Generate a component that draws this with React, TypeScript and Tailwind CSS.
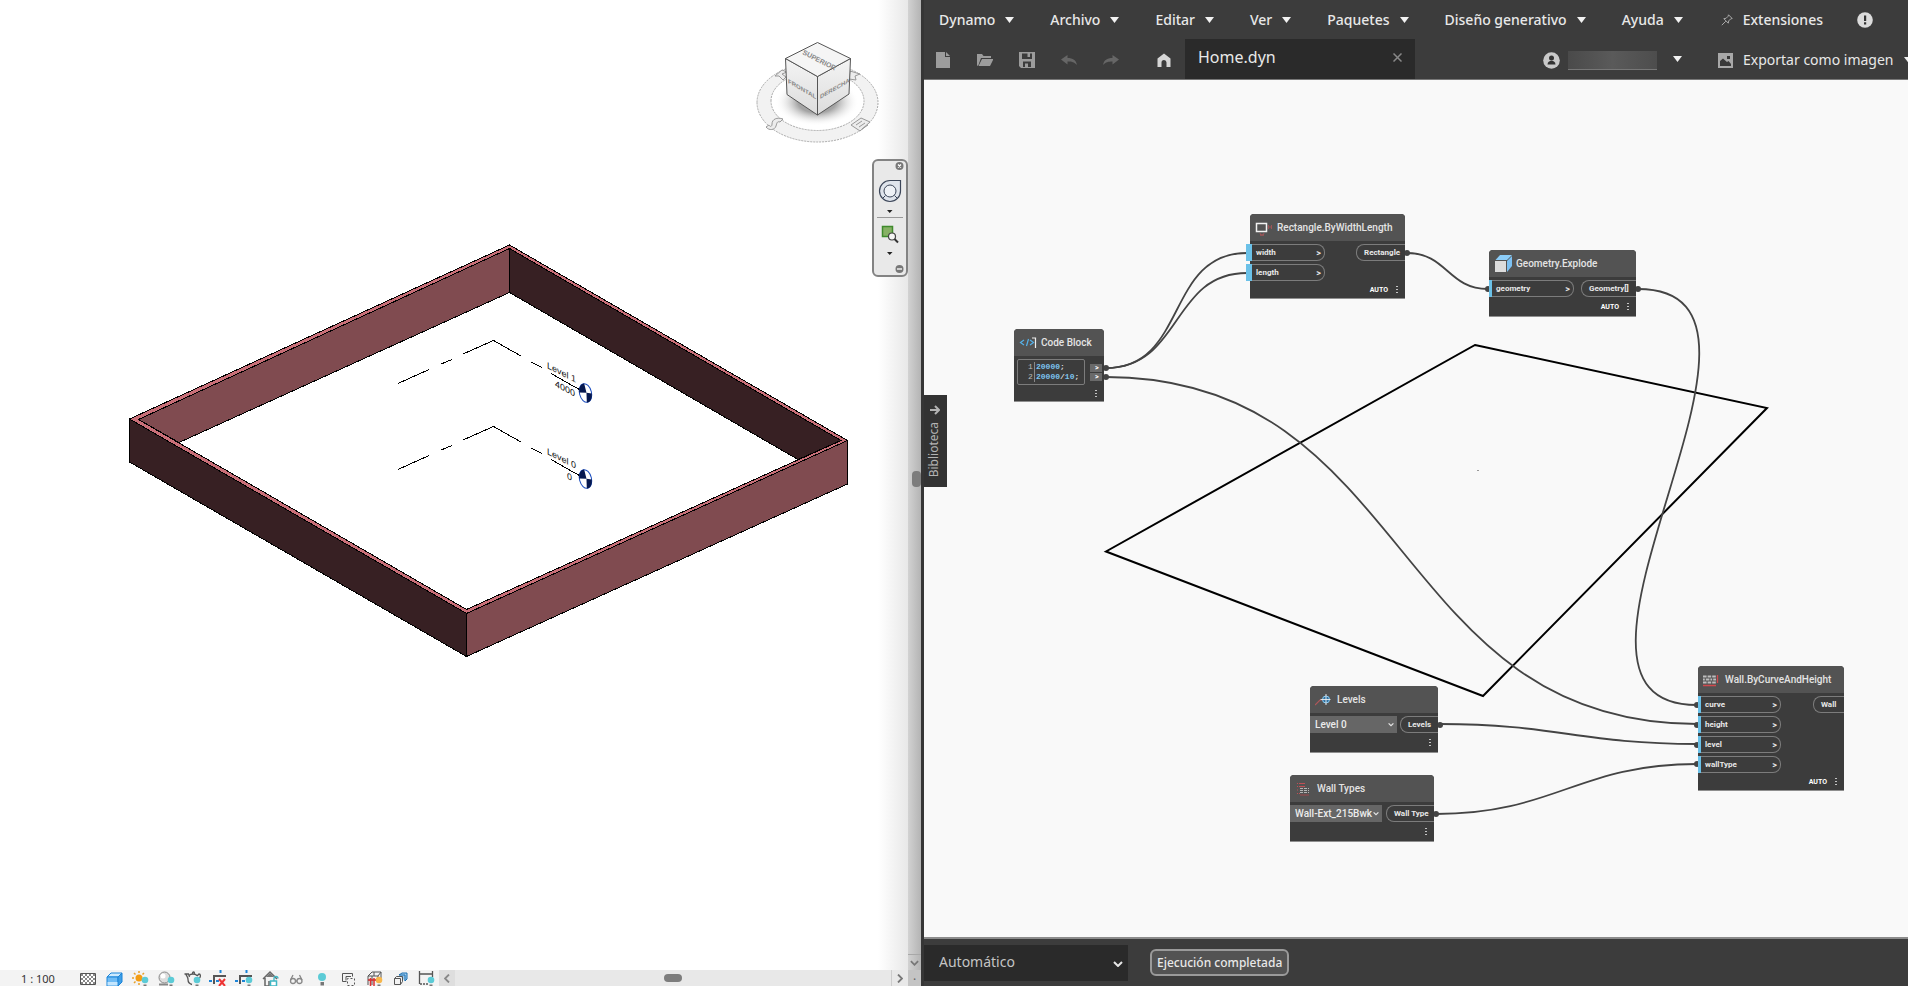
import type { ReactNode } from "react";

const wire = (x1: number, y1: number, x2: number, y2: number, k: number) =>
  `M${x1} ${y1} C${x1 + k} ${y1} ${x2 - k} ${y2} ${x2} ${y2}`;

const wires = [
  wire(1106, 368, 1247, 253, 82),
  wire(1106, 368, 1247, 273, 76),
  wire(1106, 377, 1697, 724, 308),
  wire(1407, 253, 1488, 289, 40),
  wire(1638, 289, 1697, 705, 185),
  wire(1440, 724, 1697, 744, 116),
  wire(1436, 814, 1697, 764, 119),
];

const plugs = [
  [1106, 368], [1106, 377], [1407, 253], [1488, 289], [1638, 289],
  [1440, 725], [1436, 814], [1697, 705], [1697, 725], [1697, 745], [1697, 764],
];

function Caret({ className = "" }: { className?: string }) {
  return (
    <svg className={`h-[6px] w-[9px] shrink-0 ${className}`} viewBox="0 0 9 6" fill="#f2f2f2" aria-hidden="true">
      <path d="M0 0h9L4.500 6z" />
    </svg>
  );
}

function Chevron({ className = "" }: { className?: string }) {
  return (
    <svg className={`pointer-events-none absolute ${className}`} viewBox="0 0 10 6" fill="none" stroke="#e6e6e6" strokeWidth="2" aria-hidden="true">
      <path d="M1 1l4 4 4-4" />
    </svg>
  );
}

/* ---------- Model view ---------- */

function LevelMark({ dy, name, value, vx }: { dy: number; name: string; value: string; vx: number }) {
  return (
    <g transform={`translate(0 ${dy})`}>
      <path
        d="M398 383.500L429 369.500M441 364L452 359.500M463 354L493.500 340.500L521 356M531 362L542 367.500M551 373.500L582 391"
        stroke="#000" fill="none" shapeRendering="crispEdges"
      />
      <g transform="translate(585.500 393) rotate(-14)">
        <ellipse rx="6" ry="9.500" fill="#fff" stroke="#1d4fc0" />
        <path d="M1 0L1-9.500A6 9.500 0 0 0-6 -2z M1 0L-1 9.500A6 9.500 0 0 0 6 2z" fill="#06184f" />
      </g>
      <text transform="translate(547 368) skewY(27)" fontSize="9" fill="#111">{name}</text>
      <text transform={`translate(${vx} ${387 + (vx - 556) * 0.5}) skewY(27)`} fontSize="9" fill="#111">{value}</text>
    </g>
  );
}

function ModelDrawing() {
  return (
    <svg className="h-full w-full" viewBox="0 0 908 970" preserveAspectRatio="xMinYMin meet" fontFamily="'Liberation Sans Narrow','Liberation Sans',sans-serif" role="img" aria-label="Vista 3D">
      <defs>
        <radialGradient id="shade">
          <stop offset="0.450" stopColor="#8c8c8c" stopOpacity="0.800" />
          <stop offset="1" stopColor="#fff" stopOpacity="0" />
        </radialGradient>
        <linearGradient id="face" x1="0" y1="0" x2="0" y2="1">
          <stop offset="0" stopColor="#f4f4f4" />
          <stop offset="1" stopColor="#dcdcdc" />
        </linearGradient>
      </defs>

      <g stroke="#000" strokeWidth="1" shapeRendering="crispEdges">
        <path d="M138.500 419.500L509.500 248.500V292.500L179 442.500z" fill="#804b50" />
        <path d="M509.500 248.500L841 440.500L798 459.500L509.500 292.500z" fill="#372023" />
        <path fillRule="evenodd" d="M509.500 245L847.500 440.500L466.500 613.500L129.500 419z M509.500 248.500L138.500 419.500L466.500 609.500L841 440.500z" fill="#c96f78" />
        <path d="M129.500 419V462L466.500 656.500V613.500z" fill="#372023" />
        <path d="M466.500 613.500V656.500L847.500 484V440.500z" fill="#804b50" />
      </g>

      <LevelMark dy={0} name="Level 1" value="4000" vx={555} />
      <LevelMark dy={86} name="Level 0" value="0" vx={567} />

      <g>
        <path fillRule="evenodd" d="M757 102.500a60.500 39.500 0 1 0 121 0a60.500 39.500 0 1 0-121 0z M771 101a46.500 29.500 0 1 1 93 0a46.500 29.500 0 1 1-93 0z" fill="#f2f2f2" stroke="#a9a9a9" strokeDasharray="2 1" />
        <ellipse cx="817" cy="102" rx="42" ry="24" fill="url(#shade)" />
        <g fill="#ececec" stroke="#999" strokeWidth="1" strokeLinejoin="round">
          <path d="M766 127c3 4 9 3 10-1 1-3 1-5 4-4l3-3c-6-2-11 0-11 5 0 3-2 3-3 1z" />
          <path d="M851 125l10-7 9 4-10 9z" />
          <path d="M856 125l6-4M859 127l6-4M862 129l6-4" />
          <path d="M775 76l7-6 5 2-5 2 4 3-3 3-4-4z" />
          <path d="M850 71l10 3-5 2 1 4-7-1z" />
        </g>
        <g stroke="#555" strokeWidth="1" strokeLinejoin="round">
          <path d="M785.500 58.500L817.500 76.500V115L787 94.500z" fill="url(#face)" />
          <path d="M817.500 76.500L850.500 58.500L849 94L817.500 115z" fill="url(#face)" />
          <path d="M817.500 42.500L850.500 58.500L817.500 76.500L785.500 58.500z" fill="#f5f5f5" />
        </g>
        <g fill="#858585" fontWeight="bold" fontSize="6">
          <text transform="translate(802 54) rotate(27)" fontSize="7">SUPERIOR</text>
          <text transform="translate(788 83) skewY(30)">FRONTAL</text>
          <text transform="translate(820 99) skewY(-30)">DERECHA</text>
        </g>
      </g>
    </svg>
  );
}

function NavBar() {
  return (
    <nav className="absolute top-[159px] right-0 flex h-[118px] w-[36px] flex-col rounded-md border-2 border-[#838383] bg-[#e9e9e9]" aria-label="Navegación">
      <svg className="h-full w-full" viewBox="874 161 32 114" fill="none" aria-hidden="true">
        <circle cx="899.500" cy="166" r="4" fill="#777" />
        <path d="M898 164.500l3 3m0-3l-3 3" stroke="#fff" strokeWidth="1.300" />
        <path d="M890 180.500h10.500v10.500a10.500 10.500 0 1 1-10.500-10.500z" fill="#dfe4ec" stroke="#3c4659" strokeWidth="1.200" />
        <circle cx="890" cy="191" r="6" fill="#eef1f6" stroke="#3c4659" />
        <path d="M885.500 195.500l-3 3m12-3l3 3" stroke="#3c4659" />
        <path d="M887 210h5.500l-2.750 3zM887 252h5.500l-2.750 3z" fill="#222" />
        <path d="M877 217.500h26" stroke="#999" />
        <path d="M882.500 226.500h10v10h-10z" fill="#86b164" stroke="#3f8a2c" strokeWidth="1.500" />
        <circle cx="892" cy="236.500" r="3.500" fill="#f5f5f5" stroke="#444" strokeWidth="1.200" />
        <path d="M894.500 239l3.500 3.500" stroke="#333" strokeWidth="2" />
        <circle cx="899.500" cy="269" r="4" fill="#777" />
        <path d="M897 269h5" stroke="#fff" strokeWidth="1.300" />
      </svg>
    </nav>
  );
}

const Bulb = ({ c = "#5ccbd6" }: { c?: string }) => (
  <>
    <circle cx="14" cy="10" r="3.300" fill={c} />
    <path d="M12.500 14.500h3v2h-3z" fill="#777" />
  </>
);

const viewTools: { label: string; icon: ReactNode }[] = [
  {
    label: "Nivel de detalle",
    icon: (
      <>
        <path d="M1.500 3.500h15v11h-15z" fill="#fff" stroke="#555" />
        <path d="M2 5h14M2 9h14M2 13h14" stroke="#888" strokeDasharray="2 2" strokeWidth="2" />
        <path d="M4 7h12M4 11h12" stroke="#888" strokeDasharray="2 2" strokeWidth="2" />
      </>
    ),
  },
  {
    label: "Estilo visual",
    icon: (
      <>
        <path d="M2 7l4-4h11l-4 4z" fill="#cdeafe" stroke="#1b84d8" />
        <path d="M2 7h11v9H2z" fill="#6fbcf5" stroke="#1b84d8" />
        <path d="M13 7l4-4v9l-4 4z" fill="#3f9ee6" stroke="#1b84d8" />
        <path d="M2.500 12h10v3.500h-10z" fill="#c3e5fd" />
      </>
    ),
  },
  {
    label: "Camino de sol",
    icon: (
      <>
        <circle cx="8" cy="8" r="3.500" fill="#f39c12" />
        <path d="M8 1v2M8 13v2M1 8h2M3 3l1.500 1.500M3 13l1.500-1.500M13 3l-1.500 1.500" stroke="#e9a12a" strokeWidth="1.500" />
        <Bulb />
      </>
    ),
  },
  {
    label: "Sombras",
    icon: (
      <>
        <circle cx="7.500" cy="7.500" r="5.500" fill="#ddd" stroke="#888" />
        <circle cx="6" cy="6" r="2.500" fill="#fff" />
        <path d="M2 14.500h9" stroke="#888" strokeWidth="2" />
        <Bulb />
      </>
    ),
  },
  {
    label: "Renderización",
    icon: (
      <>
        <path d="M1.500 4h4l1 3M3 4.500c1 2 2 3 2 5 0 3 2 4.500 4 5M6 5.500c2-2 6-2 8 0M9.500 3.500c0-2 2-2 2 0M14 6l2-2c2 0 1.500 3 .5 4" stroke="#555" fill="none" strokeWidth="1.300" />
        <Bulb />
      </>
    ),
  },
  {
    label: "Recortar vista",
    icon: (
      <>
        <path d="M5 14V6h12" stroke="#555" fill="none" strokeWidth="2" />
        <path d="M0 11h3M7 11h3M11.500 0v3" stroke="#1b84d8" strokeWidth="2" />
        <path d="M10 9l6 7m0-7l-6 7" stroke="#e33" strokeWidth="2" />
      </>
    ),
  },
  {
    label: "Mostrar región de recorte",
    icon: (
      <>
        <path d="M5 14V6h12" stroke="#555" fill="none" strokeWidth="2" />
        <path d="M0 11h3M7 11h3M11.500 0v3" stroke="#1b84d8" strokeWidth="2" />
        <Bulb />
      </>
    ),
  },
  {
    label: "Vista 3D bloqueada",
    icon: (
      <>
        <path d="M2 9l7-7 7 7M4 8v8h4v-5" stroke="#666" fill="none" strokeWidth="1.500" />
        <path d="M5 7l4-4 4 4z" fill="#777" />
        <path d="M9.500 11h6v5h-6z" fill="#fff" stroke="#3fb7c4" strokeWidth="1.500" />
        <path d="M13 11V8.500a2 2 0 0 1 4 0" stroke="#3fb7c4" fill="none" strokeWidth="1.300" />
      </>
    ),
  },
  {
    label: "Ocultar temporalmente",
    icon: (
      <g stroke="#888" fill="none" strokeWidth="1.300">
        <circle cx="6" cy="11" r="2.500" />
        <circle cx="12.500" cy="11" r="2.500" />
        <path d="M8.500 11h1.500M3.500 10L6 5M15 10l-2.500-5" />
      </g>
    ),
  },
  {
    label: "Mostrar elementos ocultos",
    icon: (
      <>
        <circle cx="9" cy="7" r="4" fill="#5ccbd6" />
        <path d="M7.500 12h3.500v3.500H7.500z" fill="#777" />
      </>
    ),
  },
  {
    label: "Propiedades temporales",
    icon: (
      <>
        <path d="M3.500 3.500h10v3M3.500 3.500v8h4M7 6.500h5M7 6.500v4" stroke="#555" fill="none" />
        <path d="M8.500 15.500h7v-7h-7z" stroke="#555" fill="none" strokeDasharray="2 2" />
      </>
    ),
  },
  {
    label: "Modelo analítico",
    icon: (
      <>
        <path d="M3 6l4-4h9l-3 4zM3 6v9M7 6v9M13 6v4M16 2v6M3 10h9M9 2v4" stroke="#555" fill="none" />
        <path d="M3 10h8M5.500 8v8M9 8v8" stroke="#d33" strokeWidth="1.500" />
        <Bulb c="#f7b64a" />
      </>
    ),
  },
  {
    label: "Conjuntos de desplazamiento",
    icon: (
      <>
        <path d="M8 5l3-2h5v6l-2 2M8 5h6v6" stroke="#1b6fb0" fill="#9ccbee" />
        <path d="M3.500 8.500h6v6h-6z" fill="#f3f3f3" stroke="#555" />
        <path d="M3.500 8.500l2-2h6v5l-2 3" stroke="#555" fill="none" />
      </>
    ),
  },
  {
    label: "Revelar restricciones",
    icon: (
      <>
        <path d="M2.500 1v13M15.500 1v6M2 4h14" stroke="#555" fill="none" strokeWidth="1.300" />
        <path d="M3 14h8" stroke="#555" strokeWidth="1.300" strokeDasharray="2 1" />
        <Bulb />
      </>
    ),
  },
];

function ModelPane() {
  return (
    <section className="flex min-w-0 flex-col bg-white">
      <div className="flex min-h-0 flex-1">
        <div className="relative min-w-0 flex-1 overflow-hidden">
          <div className="absolute inset-y-0 right-0 w-[30px] bg-linear-to-r from-white to-[#e8e8e8]" />
          <div className="absolute inset-0">
            <ModelDrawing />
          </div>
          <NavBar />
        </div>
        <div className="relative flex w-[13px] shrink-0 flex-col items-end justify-end bg-linear-to-r from-[#d2d2d2] to-[#b4b4b4]">
          <div className="absolute top-[471px] right-0 h-[16px] w-[9px] rounded bg-[#7d7d7d]" />
          <div className="flex h-4 w-full items-center justify-center border-t border-[#a8a8a8]">
            <svg className="h-[6px] w-[9px]" viewBox="0 0 10 6" fill="none" stroke="#777" strokeWidth="2" aria-hidden="true"><path d="M1 1l4 4 4-4" /></svg>
          </div>
        </div>
      </div>
      <div className="flex h-4 shrink-0 bg-[#f3f3f3]">
        <span className="w-[79px] shrink-0 pl-[21px] font-['Noto_Sans',sans-serif] text-[11px] leading-[18px] whitespace-pre text-[#333]">1 : 100</span>
        <div className="flex shrink-0 gap-2 overflow-hidden">
          {viewTools.map((t) => (
            <button key={t.label} type="button" aria-label={t.label} className="h-[18px] w-[18px]">
              <svg className="h-[18px] w-[18px]" viewBox="0 0 18 18" fill="none" aria-hidden="true">{t.icon}</svg>
            </button>
          ))}
        </div>
        <div className="ml-1 flex min-w-0 flex-1 items-center bg-[#e8e8e8]">
          <span className="flex h-full w-4 items-center justify-center bg-[#dedede]">
            <svg className="h-[9px] w-[6px]" viewBox="0 0 6 9" fill="none" stroke="#888" strokeWidth="1.800" aria-hidden="true"><path d="M5 .5l-4 4 4 4" /></svg>
          </span>
          <span className="flex flex-1 justify-center">
            <span className="h-2 w-[18px] rounded bg-[#7d7d7d]" />
          </span>
          <span className="flex h-full w-[17px] items-center justify-center border-l border-[#ccc]">
            <svg className="h-[9px] w-[6px]" viewBox="0 0 6 9" fill="none" stroke="#777" strokeWidth="1.800" aria-hidden="true"><path d="M1 .5l4 4-4 4" /></svg>
          </span>
          <span className="h-full w-[13px] bg-[#c4c4c4] text-center text-xs leading-3 text-[#666]">.</span>
        </div>
      </div>
    </section>
  );
}

/* ---------- Graph nodes ---------- */

function Dots() {
  return (
    <button type="button" aria-label="Más" className="flex flex-col gap-[2px] px-1">
      <span className="h-px w-[2px] bg-[#c4c4c4]" />
      <span className="h-px w-[2px] bg-[#c4c4c4]" />
      <span className="h-px w-[2px] bg-[#c4c4c4]" />
    </button>
  );
}

function Node({ place, title, icon, auto, children }: { place: string; title: string; icon: ReactNode; auto?: boolean; children: ReactNode }) {
  return (
    <article className={`absolute flex flex-col rounded-t border-b border-[#8f8f8f] bg-[#3c3c3c] font-['Roboto',sans-serif] ${place}`}>
      <header className="flex h-[27px] shrink-0 items-center gap-1 rounded-t bg-[#535353] pl-[5px]">
        <svg className="h-[18px] w-[18px] shrink-0" viewBox="0 0 18 18" fill="none" aria-hidden="true">{icon}</svg>
        <h2 className="text-[10px] leading-4 font-medium whitespace-nowrap text-[#e4e4e4]">{title}</h2>
      </header>
      <div className="flex items-start justify-between pt-[3px]">{children}</div>
      <footer className="flex flex-1 items-center justify-end gap-1 pr-[3px]">
        {auto && <span className="text-[7px] leading-3 font-bold text-white">AUTO</span>}
        <Dots />
      </footer>
    </article>
  );
}

function Inputs({ names, width, wide }: { names: string[]; width: string; wide?: boolean }) {
  return (
    <ul className={`flex flex-col gap-[3px] ${wide ? "-ml-1" : ""} ${width}`}>
      {names.map((n) => (
        <li key={n} className="flex h-[17px]">
          <span className={`shrink-0 bg-[#6bc1e8] ${wide ? "w-[6px]" : "w-[3px]"}`} />
          <span className="flex flex-1 items-center justify-between rounded-r-lg border border-l-0 border-[#7c7c7c] pr-[3px] pl-1 text-[8px] leading-3 font-bold text-[#e8e8e8]">
            {n}
            <span className="text-[9px]">&gt;</span>
          </span>
        </li>
      ))}
    </ul>
  );
}

function Output({ name, width }: { name: string; width: string }) {
  return (
    <div className={`flex h-[17px] items-center rounded-l-lg border border-r-0 border-[#7c7c7c] pl-[7px] text-[8px] leading-3 font-bold whitespace-nowrap text-[#e8e8e8] ${width}`}>
      {name}
    </div>
  );
}

function Picker({ label, value, width }: { label: string; value: string; width: string }) {
  return (
    <div className={`relative h-[17px] ${width}`}>
      <select aria-label={label} defaultValue={value} className="block h-full w-full appearance-none bg-[#666] pl-[5px] text-[10px] leading-4 font-medium text-[#ececec] outline-none">
        <option>{value}</option>
      </select>
      <Chevron className="top-[6px] right-[3px] h-[5px] w-[6px]" />
    </div>
  );
}

function Canvas() {
  return (
    <main className="relative min-h-0 flex-1 overflow-hidden bg-[#f9f9f9]">
      <svg className="absolute top-0 left-0 h-full w-full" fill="none" aria-hidden="true">
        <g transform="translate(-924 -80)">
          <path d="M1475 345L1767 408L1483 696L1106 551.500z" stroke="#000" strokeWidth="2" />
          <path d="M1477 470.500h2" stroke="#999" />
          {wires.map((d) => <path key={d} d={d} stroke="#444" strokeWidth="1.800" />)}
          {plugs.map(([x, y]) => <circle key={`${x}-${y}`} cx={x} cy={y} r="3" fill="#444" />)}
        </g>
      </svg>

      <button type="button" className="absolute top-[315px] left-0 flex h-[92px] w-[23px] flex-col items-start justify-between bg-[#333] pt-[10px] pb-[10px] pl-[2px] text-[#b3b3b3]">
        <svg className="ml-1 h-[10px] w-[10px]" viewBox="0 0 10 10" fill="none" stroke="currentColor" strokeWidth="2" aria-hidden="true"><path d="M0 5h8.500M5 1l4 4-4 4" /></svg>
        <span className="rotate-180 text-xs leading-4 [writing-mode:vertical-rl]">Biblioteca</span>
      </button>

      <Node
        place="left-[90px] top-[249px] h-[73px] w-[90px]"
        title="Code Block"
        icon={<><path d="M5 6L1.500 8.500 5 11M7.500 12L9.500 5M11 6l3.500 2.500L11 11" stroke="#55b2ea" strokeWidth="1.200" /><path d="M13 4h3.500v10" stroke="#eee" strokeWidth="1.200" /></>}
      >
        <pre className="ml-[3px] h-[26px] w-[68px] rounded-[2px] border border-[#7c7c7c] py-[2px] pl-[10px] font-['Liberation_Mono',monospace] text-[8px] leading-[10px] font-bold text-[#7cc3ee]">
          <div className="flex"><span className="mr-px w-[7px] border-r border-[#888] font-normal text-[#bbb]">1</span>20000<span className="text-[#ddd]">;</span></div>
          <div className="flex"><span className="mr-px w-[7px] border-r border-[#888] font-normal text-[#bbb]">2</span>20000<span className="text-[#ddd]">/</span>10<span className="text-[#ddd]">;</span></div>
        </pre>
        <div className="mr-[2px] flex flex-col gap-px pt-[5px]">
          <span className="h-2 w-3 bg-[#6a6a6a] pl-[5px] text-[7px] leading-2 font-bold text-white">&gt;</span>
          <span className="h-2 w-3 bg-[#6a6a6a] pl-[5px] text-[7px] leading-2 font-bold text-white">&gt;</span>
        </div>
      </Node>

      <Node
        place="left-[326px] top-[134px] h-[85px] w-[155px]"
        title="Rectangle.ByWidthLength"
        auto
        icon={<><path d="M1.500 4.500h10v8h-10z" stroke="#f2f2f2" strokeWidth="1.500" /><path d="M13.500 6v4M16.500 6v4M13.500 8h3M5 14l1 3 1-2 1 2 1-3" stroke="#9c5457" /></>}
      >
        <Inputs names={["width", "length"]} width="w-[79px]" wide />
        <Output name="Rectangle" width="w-[49px]" />
      </Node>

      <Node
        place="left-[565px] top-[170px] h-[67px] w-[147px]"
        title="Geometry.Explode"
        auto
        icon={<><path d="M1 6h11v11H1z" fill="#dcdcdc" /><path d="M1.500 5L6 0h12l-5 5z" fill="#8ccdf9" /><path d="M13 6l5-5v10l-5 6z" fill="#7cc0f2" /></>}
      >
        <Inputs names={["geometry"]} width="w-[85px]" />
        <Output name="Geometry[]" width="w-[55px]" />
      </Node>

      <Node
        place="left-[386px] top-[606px] h-[67px] w-[128px]"
        title="Levels"
        icon={<><path d="M0 14l5-5h2" stroke="#b0575a" strokeWidth="1.200" /><circle cx="11" cy="8.500" r="3.500" fill="#2f6f9f" stroke="#8ccdf5" /><path d="M11 3v11M5.500 8.500h10" stroke="#eee" strokeWidth="0.900" /></>}
      >
        <Picker label="Nivel" value="Level 0" width="w-[87px]" />
        <Output name="Levels" width="w-[38px]" />
      </Node>

      <Node
        place="left-[366px] top-[695px] h-[67px] w-[144px]"
        title="Wall Types"
        icon={<><path d="M2 3.500h1M4 3.500h6M2 6.500h1M4 6.500h6M2 13.500h1M4 13.500h1M2 10h1" stroke="#c05055" strokeWidth="1.200" /><path d="M5 8.500h9M5 10.500h9M5 12.500h9" stroke="#b5b5b5" strokeDasharray="3 1" /><path d="M5 15h9" stroke="#a0484d" /></>}
      >
        <Picker label="Tipo de muro" value="Wall-Ext_215Bwk" width="w-[92px]" />
        <Output name="Wall Type" width="w-[48px]" />
      </Node>

      <Node
        place="left-[774px] top-[586px] h-[125px] w-[146px]"
        title="Wall.ByCurveAndHeight"
        auto
        icon={<><path d="M0 5.500h13M0 11.500h13" stroke="#bdbdbd" strokeWidth="2" strokeDasharray="3.600 1" /><path d="M0 8.500h13" stroke="#bdbdbd" strokeWidth="2" strokeDasharray="1.800 1 3.600 1" /><path d="M14.500 4v8M0 14.500h13" stroke="#d04a4e" strokeWidth="1.300" /></>}
      >
        <Inputs names={["curve", "height", "level", "wallType"]} width="w-[83px]" />
        <Output name="Wall" width="w-[31px]" />
      </Node>
    </main>
  );
}

/* ---------- Dynamo window ---------- */

const menus = ["Dynamo", "Archivo", "Editar", "Ver", "Paquetes", "Diseño generativo", "Ayuda"];

function Tool({ label, dim, children }: { label: string; dim?: boolean; children: ReactNode }) {
  return (
    <button type="button" aria-label={label} className={dim ? "text-[#666]" : "text-[#9c9c9c]"}>
      <svg className="h-4 w-4" viewBox="0 0 16 16" fill="currentColor" aria-hidden="true">{children}</svg>
    </button>
  );
}

function DynamoPane() {
  return (
    <section className="flex min-w-0 flex-col overflow-hidden border-l-3 border-[#363636] bg-[#3c3c3c] font-['Noto_Sans',sans-serif] text-[#e8e8e8]">
      <div className="flex h-[39px] shrink-0 items-center pt-px pl-[15px]">
        <div className="flex items-center gap-9">
          {menus.map((m) => (
            <button key={m} type="button" className="flex items-center gap-[10px] text-sm leading-5 font-medium whitespace-nowrap">
              {m}
              <Caret className="-mt-px" />
            </button>
          ))}
        </div>
        <button type="button" className="ml-[38px] flex items-center gap-[10px] text-sm leading-5 font-medium whitespace-nowrap">
          <svg className="h-3 w-3" viewBox="0 0 12 12" fill="none" stroke="#aaa" aria-hidden="true"><path d="M7.500 .8l3.700 3.700-1.500.4-2 2-.4 2.300L2.800 4.700l2.300-.4 2-2zM4.800 7.200L.8 11.200" /></svg>
          Extensiones
        </button>
        <button type="button" aria-label="Notificaciones" className="ml-[34px]">
          <svg className="h-4 w-4" viewBox="0 0 16 16" aria-hidden="true"><circle cx="8" cy="8" r="7.800" fill="#dcdcdc" /><path d="M7 3.500h2.200v5.500H7zM7 10.300h2.200v2.200H7z" fill="#333" /></svg>
        </button>
      </div>

      <div className="flex h-[41px] shrink-0 items-center border-b border-[#777]">
        <div className="flex shrink-0 items-center gap-[26px] pt-[2px] pl-[11px]">
          <Tool label="Nuevo"><path d="M1 0h9v5h5v11H1zM11 0l4 4h-4z" /></Tool>
          <Tool label="Abrir"><path d="M0 14V2h5l1.500 2H14v2H4L1.500 13zM5 7h11.500L13 14H1.500z" /></Tool>
          <Tool label="Guardar"><path fillRule="evenodd" d="M0 0h16v16H2L0 14zM3 1.500V7h10V1.500h-2V5H8.500V1.500zM4 9.500V15h2v-3.500h3V15h3V9.500z" /></Tool>
          <Tool label="Deshacer" dim><path d="M0 7.500L6.500 3v3C12 6 15 8 16 13c-3-3-5-3.500-9.500-3.500v3z" /></Tool>
          <Tool label="Rehacer" dim><path d="M16 7.500L9.500 3v3C4 6 1 8 0 13c3-3 5-3.500 9.500-3.500v3z" /></Tool>
        </div>
        <button type="button" aria-label="Inicio" className="ml-[38px] shrink-0 pt-[2px]">
          <svg className="h-[14px] w-[14px]" viewBox="0 0 14 14" fill="#d6d6d6" aria-hidden="true"><path d="M7 .5l6.500 5V14H9.500V9.500a2.500 2.500 0 0 0-5 0V14H.500V5.500z" /></svg>
        </button>
        <div className="ml-[14px] flex h-full w-[230px] shrink-0 items-center justify-between bg-[#2a2a2a] pr-[13px] pb-1 pl-[13px] text-base">
          Home.dyn
          <button type="button" aria-label="Cerrar">
            <svg className="h-[9px] w-[9px]" viewBox="0 0 9 9" stroke="#888" strokeWidth="1.500" aria-hidden="true"><path d="M.5 .5l8 8m0-8l-8 8" /></svg>
          </button>
        </div>
        <button type="button" aria-label="Cuenta" className="ml-[128px] flex shrink-0 items-center gap-2 pt-[3px]">
          <svg className="h-[17px] w-[17px]" viewBox="0 0 17 17" aria-hidden="true"><circle cx="8.500" cy="8.500" r="8.300" fill="#c9c9c9" /><circle cx="8.500" cy="6" r="2.500" fill="#333" /><path d="M4.500 12.500c0-5 8-5 8 0z" fill="#333" /></svg>
          <span className="h-[19px] w-[89px] border-b border-[#777] bg-linear-to-r from-[#4a4a4a] via-[#5a5a5a] to-[#4d4d4d]" />
          <Caret className="-mt-1 ml-2" />
        </button>
        <button type="button" className="ml-[36px] flex shrink-0 items-center gap-[10px] pt-[2px] text-sm leading-5 whitespace-nowrap">
          <svg className="h-[15px] w-[15px]" viewBox="0 0 15 15" aria-hidden="true"><path d="M0 0h15v15H0z" fill="#a8a8a8" /><path d="M2 13V8l3-2.500L9 9l1.500-1 2.500 3v2zM9 3h3v3H9z" fill="#383838" /></svg>
          Exportar como imagen
          <Caret />
        </button>
      </div>

      <Canvas />

      <div className="flex h-[49px] shrink-0 items-center gap-[22px] border-t-2 border-[#8c8c8c]">
        <div className="relative h-[36px] w-[204px]">
          <select aria-label="Modo de ejecución" defaultValue="Automático" className="block h-full w-full appearance-none bg-[#2a2a2a] pb-[2px] pl-[15px] text-sm text-[#c4c4c4] outline-none">
            <option>Automático</option>
            <option>Manual</option>
          </select>
          <Chevron className="top-[16px] right-[5px] h-[6px] w-[10px]" />
        </div>
        <button type="button" className="h-[27px] rounded-md border-2 border-[#9a9a9a] bg-[#535353] px-[5px] text-xs leading-5 font-medium whitespace-nowrap">
          Ejecución completada
        </button>
      </div>
    </section>
  );
}

export default function App() {
  return (
    <div className="grid h-screen grid-cols-[921fr_987fr] grid-rows-1 overflow-hidden">
      <ModelPane />
      <DynamoPane />
    </div>
  );
}
